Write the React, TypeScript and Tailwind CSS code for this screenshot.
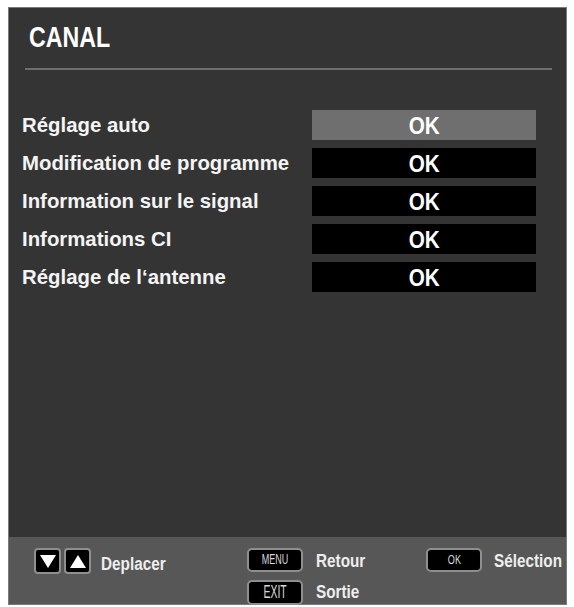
const rows = [
  'Réglage auto',
  'Modification de programme',
  'Information sur le signal',
  'Informations CI',
  'Réglage de l‘antenne',
];

function Key({ children, className = '' }: { children: React.ReactNode; className?: string }) {
  return (
    <div
      className={`w-[56px] h-[24px] shrink-0 rounded-[5px] border-2 border-[#8f8f8f] bg-black flex items-center justify-center text-[#d8d8d8] ${className}`}
    >
      {children}
    </div>
  );
}

function ArrowKey({ up }: { up?: boolean }) {
  return (
    <div className="w-[27px] h-[26px] shrink-0 rounded-[4px] border-2 border-[#8f8f8f] bg-black flex items-center justify-center">
      <svg width="18" height="15" viewBox="0 0 18 15">
        {up ? <polygon points="9,1 17,14 1,14" fill="#fff" /> : <polygon points="1,1 17,1 9,14" fill="#fff" />}
      </svg>
    </div>
  );
}

export default function App() {
  return (
    <div
      className="min-h-screen bg-white pt-[7px] pl-[8px]"
      style={{ fontFamily: '"Liberation Sans", Arial, sans-serif' }}
    >
      <div className="w-[559px] h-[598px] bg-[#343434] border border-[#7a7a7a] flex flex-col">
        <div className="flex-1 flex flex-col">
          <div className="pt-[12px] pl-[20px] h-[46px]">
            <span className="inline-block origin-left scale-x-[0.8] text-[29px] leading-[34px] font-bold text-white">
              CANAL
            </span>
          </div>
          <div className="mt-[14px] ml-[16px] mr-[14px] h-[2px] bg-[#6e6e6e]" />
          <div className="mt-[40px] flex flex-col gap-[8px] pl-[13px] pr-[30px]">
            {rows.map((label, i) => (
              <div key={label} className="flex items-center justify-between h-[30px]">
                <span className="inline-block origin-left scale-x-[0.97] text-[21px] font-bold text-[#f4f4f4] whitespace-nowrap">
                  {label}
                </span>
                <div
                  className={`w-[224px] h-[30px] shrink-0 flex items-center justify-center pt-[3px] ${
                    i === 0 ? 'bg-[#6f6f6f]' : 'bg-black'
                  }`}
                >
                  <span className="inline-block scale-x-90 text-[23px] font-bold text-white">OK</span>
                </div>
              </div>
            ))}
          </div>
        </div>

        <div className="h-[67px] bg-[#575757] flex items-start pt-[7px] pl-[25px]">
          <div className="w-[213px] shrink-0 flex items-center">
            <ArrowKey />
            <div className="w-[3px]" />
            <ArrowKey up />
            <span className="ml-[10px] pt-[7px] inline-block origin-left scale-x-[0.85] text-[18px] font-bold text-[#eeeeee]">
              Deplacer
            </span>
          </div>

          <div className="w-[179px] shrink-0 flex flex-col gap-[4px]">
            <div className="flex items-center">
              <Key>
                <span className="inline-block scale-x-[0.6] text-[15px]">MENU</span>
              </Key>
              <span className="ml-[13px] pt-[4px] inline-block origin-left scale-x-[0.85] text-[18px] font-bold text-[#eeeeee]">
                Retour
              </span>
            </div>
            <div className="flex items-center">
              <Key className="h-[25px]">
                <span className="inline-block scale-x-[0.55] text-[19px]">EXIT</span>
              </Key>
              <span className="ml-[13px] inline-block origin-left scale-x-[0.85] text-[18px] font-bold text-[#eeeeee]">
                Sortie
              </span>
            </div>
          </div>

          <div className="flex items-center">
            <Key>
              <span className="inline-block scale-x-[0.7] text-[13px]">OK</span>
            </Key>
            <span className="ml-[12px] pt-[4px] inline-block origin-left scale-x-[0.85] text-[18px] font-bold text-[#eeeeee] whitespace-nowrap">
              Sélection
            </span>
          </div>
        </div>
      </div>
    </div>
  );
}
